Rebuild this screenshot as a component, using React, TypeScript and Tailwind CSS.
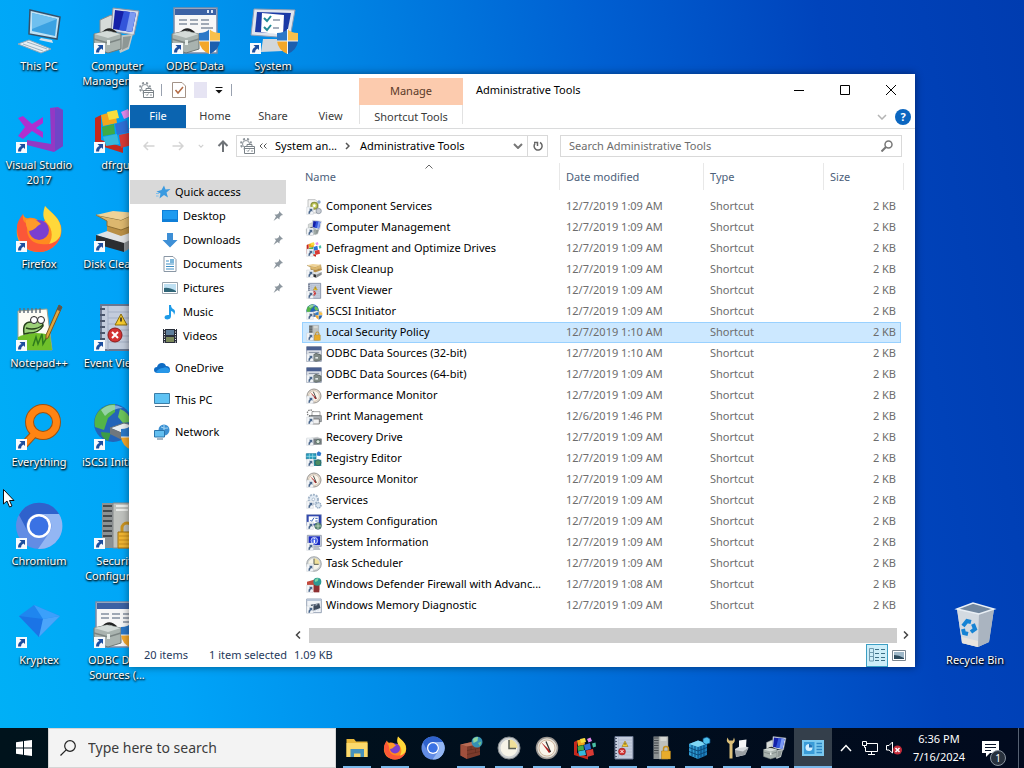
import type { ReactNode } from "react"

const shield = (
  <g>
    <path d="M28 26 Q35 26 38.500 22 V34 H28Z" fill="#2b78c8" />
    <path d="M38.500 22 Q42 26 49 26 V34 H38.500Z" fill="#f8c04a" />
    <path d="M28 34 H38.500 V47 Q29 43 28 34Z" fill="#f3a72a" />
    <path d="M38.500 34 H49 Q48 43 38.500 47Z" fill="#1c5fae" />
    <path d="M38.500 22 V47 M28 34 H49" stroke="#eef4fa" strokeWidth="1" />
  </g>
)

const toolbox = (
  <g>
    <path d="M10 26 Q16 19 23 26" fill="none" stroke="#222" strokeWidth="2.500" />
    <path d="M1 27 L14 24 L28 27 V42 L15 46 L1 41Z" fill="#a9b3af" stroke="#6f7875" strokeWidth="1" />
    <path d="M1 27 L14 24 L28 27 L15 31Z" fill="#d4dbd8" />
    <path d="M1 32 L15 36 L28 32" fill="none" stroke="#7c8583" strokeWidth="1.500" />
    <path d="M14 33 h3 v5 h-3z" fill="#e8eeea" />
  </g>
)

const glyphs: Record<string, ReactNode> = {
  pc: (
    <g>
      <path d="M15 3 L45 10 L42 32 L14 27Z" fill="#bfe2f5" stroke="#34516b" strokeWidth="1.500" />
      <path d="M17 6 L42 12 L40 29 L17 24Z" fill="#3ba2e2" />
      <path d="M17 6 L42 12 L17 22Z" fill="#6fc0ef" />
      <path d="M26 31 L37 33 L38 36 L24 33Z" fill="#d6e2ea" />
      <path d="M3 37 L14 33 L36 42 L26 46Z" fill="#e6eef3" stroke="#8fa7b8" strokeWidth="1" />
      <path d="M8 37 L28 44 M12 35 L32 42" stroke="#9db4c4" strokeWidth="1" />
    </g>
  ),
  mgmt: (
    <g>
      <path d="M7 13 L18 8 L22 10 V32 H7Z" fill="#d7dbd9" stroke="#848a8c" strokeWidth="1" />
      <path d="M20 1 L46 4 L41 28 L18 24Z" fill="#d7deea" stroke="#8c95a5" strokeWidth="1" />
      <path d="M22 3 L43 6 L39 25 L20 22Z" fill="#1420a8" />
      <path d="M31 4 L43 6 L39 25 L26 23Z" fill="#3355da" />
      <path d="M37 5 L43 6 L39 25 L33 24Z" fill="#7d9bf2" />
      <path d="M22 29 L40 27 L36 42 L27 46Z" fill="#c0c7c6" />
      <path d="M30 30 L38 29 L35 40 L29 43Z" fill="#8e9795" />
      {toolbox}
    </g>
  ),
  odbc: (
    <g>
      <path d="M3 1 H46 V46 H3Z" fill="#f7f7f7" stroke="#7c8aa6" strokeWidth="1.500" />
      <path d="M4 2 H45 V8 H4Z" fill="#3c62a4" />
      <path d="M36 3 h2 v3 h-2z M40 3 h2 v3 h-2z" fill="#d9e5f7" />
      <path d="M8 13 h8 M19 13 h8 M30 13 h8 M8 17 h8 M19 17 h8 M30 17 h8 M30 21 h12" stroke="#8490a0" strokeWidth="1.500" />
      {toolbox}
      {shield}
    </g>
  ),
  odbcSmall: (
    <g>
      <path d="M2 2 H46 V46 H2Z" fill="#e6e9ee" stroke="#68758f" strokeWidth="2" />
      <path d="M2 2 H46 V13 H2Z" fill="#4a5f90" />
      <path d="M8 19 H40 M26 25 H42" stroke="#7d899c" strokeWidth="3" />
      <path d="M20 28 L30 22 L45 27 V42 L30 46 L20 42Z" fill="#7f8985" stroke="#4d5653" strokeWidth="2" />
      <path d="M28 33 h8 v5 h-8z" fill="#dfe5e2" />
    </g>
  ),
  sysconf: (
    <g>
      <path d="M5 2 L46 3 L41 31 L2 28Z" fill="#dfe5ee" stroke="#8f9db3" strokeWidth="1" />
      <path d="M8 5 L42 6 L38 27 L6 25Z" fill="#1b3aa6" />
      <path d="M13 6 L35 8 L34 28 L12 25Z" fill="#fff" />
      <path d="M15 11 l3 3 l4 -5 M15 20 l3 3 l4 -5" fill="none" stroke="#218a96" strokeWidth="2" />
      <path d="M24 13 h7 M24 21 h6" stroke="#8a96a8" strokeWidth="1.500" />
      <path d="M14 32 L30 32 L34 44 L12 45Z" fill="#d2d7db" />
      {shield}
    </g>
  ),
  vs: (
    <g>
      <path d="M35 2 L43 1 L48 4 V40 L39 46 L12 39 V34 L36 38Z" fill="#9438c4" />
      <path d="M40 2 L48 4 V40 L40 45Z" fill="#6f45c8" />
      <path d="M3 12 L8 10 L17 18 L28 11 V32 L17 25 L8 33 L3 30 L10 21Z M28 17 L21 22 L28 26Z" fill="#b02fcf" fillRule="evenodd" />
    </g>
  ),
  defrag: (
    <g>
      <path d="M2 12 L8 9 V34 L30 41 V47 L2 38Z" fill="#c5281c" />
      <path d="M8 9 L22 5 L24 17 L10 20Z" fill="#f3a51c" />
      <path d="M14 6 L24 4 L26 12 L16 14Z" fill="#f7de3e" />
      <path d="M9 21 L21 18 L22 28 L10 30Z" fill="#3fab46" />
      <path d="M22 18 L34 14 L36 26 L24 29Z" fill="#2e6fd6" />
      <path d="M10 31 L24 28 L26 38 L13 40Z" fill="#35b8dc" />
      <path d="M26 29 L40 26 L42 38 L28 42Z" fill="#d83a34" />
      <path d="M28 6 L35 3 L38 10 L31 13Z" fill="#e58bee" />
      <path d="M38 15 L45 13 L46 21 L40 23Z" fill="#49c0a4" />
    </g>
  ),
  firefox: (
    <g>
      <path d="M30 1 C34 7 43 10 46 21 C49 34 38 47 24 47 C10 47 0 37 2 23 C3 16 7 12 8 9 C9 13 12 14 14 13 C20 12 24 16 25 17 C33 18 31 9 30 1Z" fill="#ff8a1f" />
      <path d="M30 1 C36 8 46 13 46 25 C46 34 40 42 31 43 C39 35 38 24 32 18 C27 13 28 7 30 1Z" fill="#ffd83a" />
      <path d="M2 23 C2 36 11 47 24 47 C35 47 43 40 46 30 C41 39 33 40 26 39 C14 38 10 28 13 18 C9 19 7 14 8 9 C5 13 2 17 2 23Z" fill="#fb5738" />
      <circle cx="24" cy="25" r="10" fill="#7a3fd0" />
      <path d="M11 15 C18 12 23 16 26 19 C21 21 21 25 14 26 Q10 21 11 15Z" fill="#ff9a2a" />
    </g>
  ),
  cleanup: (
    <g>
      <path d="M3 30 L20 24 L47 30 L31 39Z" fill="#dfe2e4" />
      <path d="M3 30 L31 38 V47 L3 39Z" fill="#2c2e31" />
      <path d="M31 38 L47 30 V38 L31 47Z" fill="#8b9094" />
      <path d="M14 20 L28 24 L46 18 L48 24 L28 31 L14 26Z" fill="#b98f45" />
      <path d="M3 10 L28 15 L44 8 L46 18 L28 25 L14 21 L14 16Z" fill="#dcb76e" stroke="#8f6f33" strokeWidth="1" />
      <path d="M3 10 L20 6 L44 8 L28 15Z" fill="#efd398" />
    </g>
  ),
  notepad: (
    <g>
      <path d="M3 7 L32 5 L37 46 H3Z" fill="#fdfdf5" stroke="#9aa08d" strokeWidth="1" />
      <path d="M3 33 Q18 26 35 31 L37 46 H3Z" fill="#6fc02a" />
      <path d="M18 42 l3 -9 l2 7 l4 -10 l1 10 l4 -7" fill="none" stroke="#2f7a1c" strokeWidth="1.500" />
      <path d="M5 4 v5 M9 4 v5 M13 4 v5 M17 4 v5 M21 4 v5 M25 4 v5" stroke="#63707c" strokeWidth="1.500" />
      <path d="M9 30 Q7 17 17 18 Q28 14 28 22 Q24 29 14 29Z" fill="#9bd077" stroke="#26421a" strokeWidth="1.500" />
      <path d="M11 24 Q20 27 28 21" fill="none" stroke="#26421a" strokeWidth="1.500" />
      <circle cx="19" cy="16" r="3.500" fill="#fff" stroke="#222" />
      <circle cx="26" cy="16" r="3.500" fill="#fff" stroke="#222" />
      <path d="M44 1 L47 3 L33 34 L31 35 L31 31Z" fill="#e0a63c" stroke="#7a5521" strokeWidth="1" />
      <path d="M44 1 L47 3 L45 7 L42 6Z" fill="#555" />
    </g>
  ),
  event: (
    <g>
      <path d="M8 1 H44 V46 H8Z" fill="#c3ccdc" stroke="#6a7790" strokeWidth="2" />
      <path d="M15 2 V46 M15 8 h28 M15 14 h28 M15 20 h28 M15 26 h28 M15 32 h28 M15 38 h28" stroke="#a3afc4" strokeWidth="1" />
      <path d="M7 5 h5 M7 11 h5 M7 17 h5 M7 23 h5 M7 29 h5 M7 35 h5 M7 41 h5" stroke="#4b566c" strokeWidth="2" />
      <path d="M28 10 L34 21 H22Z" fill="#f6cb2d" stroke="#8a6d0c" strokeWidth="1" />
      <path d="M28 13.500 v4" stroke="#222" strokeWidth="1.500" />
      <circle cx="22" cy="31" r="7" fill="#d33232" stroke="#8c1b1b" />
      <path d="M19 28 l6 6 M25 28 l-6 6" stroke="#fff" strokeWidth="2" />
    </g>
  ),
  everything: (
    <g fill="none">
      <path d="M19 31 L7 44" stroke="#9b5212" strokeWidth="8" />
      <circle cx="28" cy="19" r="13.500" stroke="#9b5212" strokeWidth="9" />
      <path d="M20 30 L8 43" stroke="#ff8412" strokeWidth="6" />
      <circle cx="28" cy="19" r="13.500" stroke="#ff8412" strokeWidth="7" />
    </g>
  ),
  iscsi: (
    <g>
      <circle cx="20" cy="20" r="19" fill="#2464b8" />
      <path d="M5 9 Q12 1 22 1 L22 9 L15 15 L11 27 L2 24 Q0 16 5 9Z" fill="#53b548" />
      <path d="M27 6 Q36 9 38 19 L30 20 L25 14Z" fill="#6cc45a" />
      <path d="M8 29 L18 30 L15 38 Q8 35 8 29Z" fill="#3c9c46" />
      <path d="M8 7 Q18 -2 30 5 Q20 5 12 13Z" fill="#d6efff" fillOpacity="0.5" />
      <path d="M17 25 L31 20 L47 24 L31 31Z" fill="#eceff1" stroke="#6c7378" strokeWidth="1" />
      <path d="M17 25 L31 31 V38 L17 31Z" fill="#70777d" />
      {shield}
    </g>
  ),
  chromium: (
    <g>
      <circle cx="24" cy="24" r="23" fill="#628ce4" />
      <path d="M4 13 A23 23 0 0 1 44 12 H24 A12 12 0 0 0 13 30Z" fill="#2f62cc" />
      <path d="M24 12 H44 A23 23 0 0 1 23 47 L34 31 A12 12 0 0 0 24 12Z" fill="#93b6f3" />
      <circle cx="24" cy="24" r="12" fill="#fff" />
      <circle cx="24" cy="24" r="9.500" fill="#3a72e4" />
    </g>
  ),
  security: (
    <g>
      <path d="M9 1 H20 V46 H9Z" fill="#8d9293" />
      <path d="M20 1 H38 V46 H20Z" fill="#bfc2be" stroke="#85898a" strokeWidth="1" />
      <path d="M10 4 h9 M10 9 h9 M10 14 h9 M10 19 h9 M10 24 h9 M10 29 h9 M10 34 h9" stroke="#464b4e" strokeWidth="2" />
      <path d="M23 4 h12 M23 8 h12" stroke="#e9ebe8" strokeWidth="2" />
      <path d="M29 31 v-5 a5 5 0 0 1 10 0 v5" fill="none" stroke="#c99320" strokeWidth="3" />
      <path d="M25 30 H43 V46 H25Z" fill="#f1b632" stroke="#9c7013" strokeWidth="1" />
      <path d="M26 34 h16 M26 38 h16 M26 42 h16" stroke="#c88d1c" strokeWidth="1" />
    </g>
  ),
  kryptex: (
    <g>
      <path d="M4 15 L19 4 L45 15 L24 36Z" fill="#1f86ef" />
      <path d="M19 4 L45 15 L28 18Z" fill="#3ba0fb" />
      <path d="M4 15 L28 18 L24 36Z" fill="#1b74e6" />
      <path d="M28 18 L45 15 L24 36Z" fill="#4ba5fa" />
    </g>
  ),
  bin: (
    <g>
      <path d="M6 8 L22 2 L43 8 L38 41 L27 46 L11 42Z" fill="#c2ccd6" />
      <path d="M6 8 L28 13 L27 46 L11 42Z" fill="#d3dae1" />
      <path d="M28 13 L43 8 L38 41 L27 46Z" fill="#aab4c0" />
      <path d="M6 8 L22 2 L43 8 L28 13Z" fill="#72879e" stroke="#e9eff5" strokeWidth="1.500" />
      <path d="M11 36 L27 40 V46 L11 42Z" fill="#e8e4de" />
      <g fill="none" stroke="#1583d4" strokeWidth="4">
        <path d="M12 25 L16 20 L20 21" />
        <path d="M22 23 L24 28 L20 31" />
        <path d="M17 33 L13 32 L12 28" />
      </g>
    </g>
  ),
  component: (
    <g>
      <path d="M6 2 H28 L36 10 V42 H6Z" fill="#f4f4f2" stroke="#a3a6a8" strokeWidth="2" />
      <circle cx="25" cy="20" r="10" fill="#c3cb5a" stroke="#8c9440" strokeWidth="4" />
      <circle cx="25" cy="20" r="4" fill="#fff" />
      <circle cx="39" cy="9" r="5" fill="#8fa9cc" />
      <circle cx="38" cy="36" r="8" fill="#c8cdd4" stroke="#7d8794" strokeWidth="2" />
    </g>
  ),
  perf: (
    <g>
      <circle cx="24" cy="24" r="21" fill="#e3dfd6" stroke="#9b9691" strokeWidth="3" />
      <circle cx="24" cy="24" r="16" fill="#faf6ec" stroke="#c8a98e" strokeWidth="1.500" />
      <path d="M12 12 L28 34 L32 31Z" fill="#b02020" />
      <path d="M22 11 L31 32" stroke="#333" strokeWidth="2.500" />
    </g>
  ),
  print: (
    <g>
      <circle cx="13" cy="12" r="9" fill="none" stroke="#777" strokeWidth="4" strokeDasharray="4 3" />
      <path d="M18 8 H42 V20 H18Z" fill="#fff" stroke="#777" strokeWidth="2" />
      <path d="M10 20 H46 V38 H10Z" fill="#a9adb1" stroke="#5c6165" strokeWidth="2" />
      <path d="M20 30 H40 V45 H20Z" fill="#f2f2f2" stroke="#555" strokeWidth="2" />
    </g>
  ),
  recovery: (
    <g>
      <path d="M2 26 L34 20 L47 26 V42 L20 46 L2 40Z" fill="#c9cccf" />
      <path d="M20 26 H47 V44 H20Z" fill="#787e83" />
      <circle cx="36" cy="35" r="6" fill="#d7e2d9" stroke="#3d5e48" strokeWidth="2" />
    </g>
  ),
  regedit: (
    <g>
      <path d="M4 16 L22 9 L40 15 V38 L22 46 L4 38Z" fill="#1d7fbe" />
      <path d="M4 16 L22 22 V46 L4 38Z" fill="#2f9bd2" />
      <path d="M4 16 L22 9 L40 15 L22 22Z" fill="#7fd6f3" />
      <path d="M4 23 L22 30 L40 23 M4 31 L22 38 L40 31 M10 18 V41 M16 20 V43 M28 20 V43 M34 18 V41 M22 22 V46" fill="none" stroke="#0b4a7c" strokeWidth="2" />
      <path d="M32 5 L40 2 L46 6 V14 L38 17 L32 13Z" fill="#4fc0ee" stroke="#0b4a7c" strokeWidth="1.500" />
    </g>
  ),
  regeditSmall: (
    <g>
      <path d="M1 8 H30 V24 H1Z" fill="#2a9fbe" stroke="#176f92" strokeWidth="2" />
      <path d="M10 8 V24 M20 8 V24 M1 16 H30" stroke="#a5e2ee" strokeWidth="2" />
      <path d="M38 1 L46 6 L43 15 L34 14 L32 6Z" fill="#2f78cc" />
      <path d="M22 26 H46 V45 H24Z" fill="#2b8f98" />
      <circle cx="36" cy="35" r="9" fill="#4d8c62" stroke="#25576a" strokeWidth="2" />
    </g>
  ),
  services: (
    <g>
      <circle cx="22" cy="19" r="14" fill="#e3ecf5" stroke="#a3b5c9" strokeWidth="6" strokeDasharray="6 3" />
      <circle cx="22" cy="19" r="4" fill="#fff" stroke="#8fa5bd" strokeWidth="2" />
      <circle cx="37" cy="37" r="8" fill="#dbe6f0" stroke="#8fa5bd" strokeWidth="4" strokeDasharray="4 2" />
    </g>
  ),
  sysconfSmall: (
    <g>
      <path d="M2 2 H46 V34 H2Z" fill="#2940ae" stroke="#8796bb" strokeWidth="2" />
      <path d="M8 7 H38 V29 H8Z" fill="#fff" />
      <path d="M13 18 l4 4 l7 -11 M28 13 h7 M28 21 h7" fill="none" stroke="#3b66b8" strokeWidth="3" />
      <circle cx="36" cy="36" r="10" fill="#5d8d6c" stroke="#3c5f6c" strokeWidth="2" />
      <path d="M36 27 V45 M27 36 H45" stroke="#dbe8e0" strokeWidth="2" />
    </g>
  ),
  info: (
    <g>
      <path d="M4 1 H46 V34 H4Z" fill="#c8d0e0" stroke="#7d8799" strokeWidth="2" />
      <path d="M8 4 H42 V30 H8Z" fill="#1c2cc0" />
      <circle cx="25" cy="17" r="10" fill="#4a66ea" stroke="#fff" strokeWidth="2" />
      <path d="M25 10 v3 M25 15 v9" stroke="#fff" strokeWidth="4" />
      <path d="M20 35 H38 L44 45 H16Z" fill="#b9bfc8" />
    </g>
  ),
  task: (
    <g>
      <circle cx="24" cy="24" r="22" fill="#ccd0d2" stroke="#84898c" strokeWidth="2" />
      <circle cx="24" cy="24" r="17" fill="#f6f4e8" />
      <path d="M24 24 V7 A17 17 0 0 1 41 24Z" fill="#efe09a" />
      <path d="M24 8 V25 H38" fill="none" stroke="#5a5f55" strokeWidth="3" />
    </g>
  ),
  firewall: (
    <g>
      <path d="M3 17 L30 11 L42 16 V38 L16 46 L3 39Z" fill="#7b3a2b" />
      <path d="M3 17 L16 21 V46 L3 39Z" fill="#a0503d" />
      <path d="M3 17 L30 11 L42 16 L16 21Z" fill="#b96c55" />
      <path d="M16 29 L42 24 M16 37 L42 31 M24 20 V28 M33 26 V33" stroke="#532419" strokeWidth="1" />
      <circle cx="36" cy="12" r="11" fill="#3590b4" />
      <path d="M28 6 Q33 1 38 2 L37 10 L29 14Z" fill="#8fd6a0" />
      <path d="M38 14 L45 11 L42 20Z" fill="#71c48a" />
    </g>
  ),
  firewallSmall: (
    <g>
      <path d="M3 14 L24 8 L40 16 V40 L20 46 L3 38Z" fill="#c34a3d" />
      <path d="M24 24 H40 V46 H24Z" fill="#8e2f31" />
      <circle cx="34" cy="14" r="12" fill="#2d9a94" />
      <path d="M26 8 Q32 2 38 4 L35 12 L28 15Z" fill="#7fd6a4" />
    </g>
  ),
  memory: (
    <g>
      <path d="M2 3 H46 V44 H2Z" fill="#f0f3f7" stroke="#687a94" strokeWidth="2" />
      <path d="M2 3 H46 V9 H2Z" fill="#b9c6d8" />
      <path d="M14 20 L40 16 L43 30 L22 38Z" fill="#3d4a5c" />
      <path d="M20 22 l5 -1 M28 21 l6 -1 M28 40 v-5 M36 38 v-5" stroke="#c7d2e2" strokeWidth="3" />
    </g>
  ),
  explorer: (
    <g>
      <path d="M3 6 H18 L22 11 H45 V42 H3Z" fill="#e9b83a" />
      <path d="M3 14 H45 V42 H3Z" fill="#fbd96c" />
      <path d="M11 26 H38 V42 H31 V35 H18 V42 H11Z" fill="#4792bd" />
    </g>
  ),
  devices: (
    <g>
      <path d="M5 3 Q1 12 9 16 V45 H15 V16 Q22 12 18 3 L16 9 H8Z" fill="#dcc07a" />
      <path d="M20 26 L34 18 L47 23 L40 38 L22 42Z" fill="#d5d9dc" />
      <path d="M28 9 L43 7 L42 22 L28 24Z" fill="#f5f5f5" />
      <path d="M20 28 L36 31 L47 23 L41 37 L23 42Z" fill="#9a9fa3" />
    </g>
  ),
  panel: (
    <g>
      <path d="M2 8 H46 V40 H2Z" fill="#7cc9ef" />
      <path d="M6 12 H27 V36 H6Z" fill="#3a9cd8" />
      <circle cx="16" cy="23" r="7" fill="#d5f0ff" />
      <path d="M16 23 V16 A7 7 0 0 1 23 23Z" fill="#1d6fb4" />
      <path d="M31 15 h11 M31 21 h11 M31 27 h11 M31 33 h11" stroke="#2a86c4" strokeWidth="3" />
    </g>
  ),
}

function Glyph({ name, className, shortcut }: { name: string; className: string; shortcut?: "large" | "small" }) {
  return (
    <svg viewBox="0 0 48 48" className={`overflow-visible ${className}`} aria-hidden="true">
      {glyphs[name]}
      {shortcut === "large" && (
        <g>
          <path d="M1 36 h11 v11 h-11z" fill="#f7fafd" />
          <path d="M3 45.500 Q3 41 6.500 40 L4.500 38 H10 V43 L8.500 41.500 Q6 42.500 6 45.500Z" fill="#1d4e9e" />
        </g>
      )}
      {shortcut === "small" && (
        <g>
          <path d="M2 24 h20 v22 h-20z" fill="#f4f6f8" stroke="#b4bdc6" strokeWidth="1" />
          <path d="M7 44 Q7 35 12 33 L9 29 H19 V39 L16 36 Q12 38 12 44Z" fill="#4a678c" />
        </g>
      )}
    </svg>
  )
}

const desktopColumns = [
  [
    { icon: "pc", label: "This PC", plain: true },
    { icon: "vs", label: "Visual Studio 2017" },
    { icon: "firefox", label: "Firefox" },
    { icon: "notepad", label: "Notepad++" },
    { icon: "everything", label: "Everything" },
    { icon: "chromium", label: "Chromium" },
    { icon: "kryptex", label: "Kryptex" },
  ],
  [
    { icon: "mgmt", label: "Computer Management" },
    { icon: "defrag", label: "dfrgui" },
    { icon: "cleanup", label: "Disk Cleanup" },
    { icon: "event", label: "Event Viewer" },
    { icon: "iscsi", label: "iSCSI Initiator" },
    { icon: "security", label: "Security Configurat..." },
    { icon: "odbc", label: "ODBC Data Sources (..." },
  ],
  [{ icon: "odbc", label: "ODBC Data" }],
  [{ icon: "sysconf", label: "System" }],
]

function DesktopIcon({ icon, label, plain }: { icon: string; label: string; plain?: boolean }) {
  return (
    <button className="flex h-[99px] w-[78px] flex-col items-center pt-[7px]">
      <Glyph name={icon} className="size-12 shrink-0" shortcut={plain ? undefined : "large"} />
      <span className="mt-[3px] w-[76px] text-center leading-[15px] text-white [text-shadow:1px_1px_2px_#000,0_1px_2px_#000]">{label}</span>
    </button>
  )
}

const files = [
  ["component", "Component Services", "12/7/2019 1:09 AM"],
  ["mgmt", "Computer Management", "12/7/2019 1:09 AM"],
  ["defrag", "Defragment and Optimize Drives", "12/7/2019 1:09 AM"],
  ["cleanup", "Disk Cleanup", "12/7/2019 1:09 AM"],
  ["event", "Event Viewer", "12/7/2019 1:09 AM"],
  ["iscsi", "iSCSI Initiator", "12/7/2019 1:09 AM"],
  ["security", "Local Security Policy", "12/7/2019 1:10 AM"],
  ["odbcSmall", "ODBC Data Sources (32-bit)", "12/7/2019 1:10 AM"],
  ["odbcSmall", "ODBC Data Sources (64-bit)", "12/7/2019 1:09 AM"],
  ["perf", "Performance Monitor", "12/7/2019 1:09 AM"],
  ["print", "Print Management", "12/6/2019 1:46 PM"],
  ["recovery", "Recovery Drive", "12/7/2019 1:09 AM"],
  ["regeditSmall", "Registry Editor", "12/7/2019 1:09 AM"],
  ["perf", "Resource Monitor", "12/7/2019 1:09 AM"],
  ["services", "Services", "12/7/2019 1:09 AM"],
  ["sysconfSmall", "System Configuration", "12/7/2019 1:09 AM"],
  ["info", "System Information", "12/7/2019 1:09 AM"],
  ["task", "Task Scheduler", "12/7/2019 1:09 AM"],
  ["firewallSmall", "Windows Defender Firewall with Advanc...", "12/7/2019 1:08 AM"],
  ["memory", "Windows Memory Diagnostic", "12/7/2019 1:09 AM"],
]

const navIcons: Record<string, ReactNode> = {
  star: (
    <g>
      <path d="M9 1.500 L10.500 5.500 L15.500 5 L11.500 8.500 L13 13.500 L9 11 L4.500 14.500 L5.500 9.500 L1.500 7.500 L6.500 6Z" fill="#3a9ae0" />
      <path d="M1 9.500 H4 M1 12 H3.500" stroke="#7dbfee" />
    </g>
  ),
  desktop: (
    <g>
      <path d="M0 2 H16 V14 H0Z" fill="#0f7fd8" />
      <path d="M1 3 H15 V11 H1Z" fill="#1e9bf0" />
    </g>
  ),
  downloads: <path d="M5 1 H11 V8 H15.500 L8 15.500 L0.500 8 H5Z" fill="#3d8fd6" />,
  documents: (
    <g>
      <path d="M2 0.500 H11 L14 3.500 V15.500 H2Z" fill="#fff" stroke="#8a97a5" />
      <path d="M4 5 h3 M4 8 h8 M4 10.500 h8 M4 13 h8" stroke="#3f8fc4" />
      <path d="M8 3 h4 v4 h-4z" fill="#7bb6da" />
    </g>
  ),
  pictures: (
    <g>
      <path d="M0.500 2.500 H15.500 V13.500 H0.500Z" fill="#fff" stroke="#9aa5ae" />
      <path d="M2 4 H14 V12 H2Z" fill="#bfe0f2" />
      <path d="M2 8 Q7 7 14 11 V12 H2Z" fill="#2f6577" />
    </g>
  ),
  music: <path d="M7 1 H9 Q9 4 12 5.500 Q14 7 12 11 Q12 7.500 9 7 V12 Q9 15 5.500 15.500 Q2.500 15.500 2.500 13 Q3 10.500 7 11Z" fill="#1e9be8" />,
  videos: (
    <g>
      <path d="M1 1 H15 V15 H1Z" fill="#2a2f3a" />
      <path d="M4 2 H12 V7 H4Z" fill="#5f7f9c" />
      <path d="M4 9 H12 V14 H4Z" fill="#7c8a5c" />
      <path d="M2.500 1 V15 M13.500 1 V15" stroke="#fff" strokeDasharray="1 1.500" />
    </g>
  ),
  onedrive: (
    <g>
      <path d="M3 7 Q4 3 8 3 Q11 3 12 6 Q16 6 16 10 Q16 13 13 13 H4 Q0 13 0 10 Q0 7 3 7Z" fill="#0f6cc4" />
      <path d="M2 12 Q5 8 9 8 Q13 6 16 10 Q16 13 13 13 H4Z" fill="#2797e8" />
    </g>
  ),
  pc: (
    <g>
      <path d="M0.500 1.500 H15.500 V11.500 H0.500Z" fill="#5fc3f4" stroke="#3b7ea8" />
      <path d="M1 14.500 H15" stroke="#5b7083" />
    </g>
  ),
  network: (
    <g>
      <circle cx="10" cy="6" r="5.500" fill="#3b90d2" />
      <path d="M7 3 Q10 5 14 4 M10 1 V8" stroke="#a8d8f5" fill="none" />
      <path d="M0.500 6.500 H10.500 V13 H0.500Z" fill="#63bff0" stroke="#2b76ad" />
      <path d="M3 15 H9" stroke="#4b6f8c" />
    </g>
  ),
}

const quickAccess = [
  { icon: "desktop", label: "Desktop", pinned: true },
  { icon: "downloads", label: "Downloads", pinned: true },
  { icon: "documents", label: "Documents", pinned: true },
  { icon: "pictures", label: "Pictures", pinned: true },
  { icon: "music", label: "Music" },
  { icon: "videos", label: "Videos" },
]

const roots = [
  { icon: "onedrive", label: "OneDrive" },
  { icon: "pc", label: "This PC" },
  { icon: "network", label: "Network" },
]

function NavIcon({ name }: { name: string }) {
  return (
    <svg viewBox="0 0 16 16" className="size-4 shrink-0" aria-hidden="true">
      {navIcons[name]}
    </svg>
  )
}

function Pin() {
  return (
    <svg viewBox="0 0 12 12" className="mr-0.5 ml-auto size-3" aria-hidden="true">
      <path d="M7 1 L11 5 L9 5.500 L7.500 7.500 L7.500 9.500 L5.500 8 L1.500 11 L4 6.500 L2.500 4.500 L5 4.500 L7 3Z" fill="#8d979f" />
    </svg>
  )
}

function ToolsIcon() {
  return (
    <svg viewBox="0 0 16 16" className="size-4 shrink-0" fill="none" stroke="#8c9399" aria-hidden="true">
      <circle cx="7" cy="6" r="5" strokeWidth="2" strokeDasharray="2 2" />
      <circle cx="7" cy="6" r="3.500" />
      <path d="M5.500 8.500 H15.500 V15.500 H5.500Z M8 8 V6.500 H13 V8" fill="#fff" stroke="#7b8389" />
      <path d="M6 10.500 H15" stroke="#7b8389" />
      <path d="M8 12.500 l1 1 l1.500 -2 M12 13 h2" />
    </svg>
  )
}

function TitleBar() {
  return (
    <div className="flex h-[31px] shrink-0 items-center">
      <div className="flex w-[230px] items-center pl-[9px]">
        <ToolsIcon />
        <span className="ml-[7px] h-3 w-px bg-gray-400" />
        <button aria-label="Properties" className="ml-2.5">
          <svg viewBox="0 0 14 16" className="block h-4 w-3.5">
            <path d="M0.500 0.500 H10 L13.500 4 V15.500 H0.500Z" fill="#fff" stroke="#a39388" />
            <path d="M3.500 8 L6 11 L11 5" fill="none" stroke="#b36b44" strokeWidth="1.500" />
          </svg>
        </button>
        <span className="ml-2 h-4 w-[13px] bg-[#e6e4f3]" />
        <button aria-label="Customize Quick Access Toolbar" className="ml-2">
          <svg viewBox="0 0 8 8" className="block size-2">
            <path d="M0.500 1.500 H7.500" stroke="#111" />
            <path d="M0.500 4 H7.500 L4 7.500Z" fill="#111" />
          </svg>
        </button>
        <span className="ml-2 h-3 w-px bg-gray-400" />
      </div>
      <div className="mt-1 flex h-[27px] w-[104px] items-center justify-center bg-[#fccbae] text-[#5a3a28]">Manage</div>
      <div className="ml-[13px] flex-1 pt-px text-black">Administrative Tools</div>
      <button aria-label="Minimize" className="flex h-full w-[46px] items-center justify-center">
        <svg viewBox="0 0 10 10" className="size-2.5"><path d="M0 5.500 H10" stroke="#000" /></svg>
      </button>
      <button aria-label="Maximize" className="flex h-full w-[46px] items-center justify-center">
        <svg viewBox="0 0 10 10" className="size-2.5"><path d="M0.500 0.500 H9.500 V9.500 H0.500Z" fill="none" stroke="#000" /></svg>
      </button>
      <button aria-label="Close" className="mr-px flex h-full w-[46px] items-center justify-center">
        <svg viewBox="0 0 10 10" className="size-2.5"><path d="M0 0 L10 10 M10 0 L0 10" stroke="#000" /></svg>
      </button>
    </div>
  )
}

function RibbonTabs() {
  return (
    <div className="flex h-6 shrink-0 border-b border-[#dadbdc] text-[#3b3b3b]">
      <button className="ml-px w-14 bg-[#0b64b0] text-white">File</button>
      <button className="w-[58px]">Home</button>
      <button className="w-[58px]">Share</button>
      <button className="w-[57px]">View</button>
      <button className="mb-1 w-[104px] border-x border-[#e2e2e2] pt-1">Shortcut Tools</button>
      <div className="ml-auto flex items-center gap-2 pr-1">
        <button aria-label="Expand the Ribbon">
          <svg viewBox="0 0 10 6" className="h-1.5 w-2.5"><path d="M1 1 L5 5 L9 1" fill="none" stroke="#b4b4b4" strokeWidth="1.500" /></svg>
        </button>
        <button aria-label="Help" className="size-4 rounded-full bg-[#0b66c0] text-[11px] leading-4 font-bold text-white">?</button>
      </div>
    </div>
  )
}

function AddressRow() {
  return (
    <div className="flex h-[34px] shrink-0 items-center pr-[13px] pl-3.5">
      <button aria-label="Back" className="w-[29px]">
        <svg viewBox="0 0 12 10" className="h-2.5 w-3"><path d="M11.500 5 H1 M5 1 L1 5 L5 9" fill="none" stroke="#d4d4d4" strokeWidth="1.500" /></svg>
      </button>
      <button aria-label="Forward" className="w-[26px]">
        <svg viewBox="0 0 12 10" className="h-2.5 w-3"><path d="M0.500 5 H11 M7 1 L11 5 L7 9" fill="none" stroke="#d4d4d4" strokeWidth="1.500" /></svg>
      </button>
      <button aria-label="Recent locations" className="w-[19px]">
        <svg viewBox="0 0 8 5" className="h-1 w-1.5"><path d="M1 1 L4 4 L7 1" fill="none" stroke="#d0d0d0" strokeWidth="1.500" /></svg>
      </button>
      <button aria-label="Up" className="w-[19px]">
        <svg viewBox="0 0 12 12" className="size-3"><path d="M6 12 V1.500 M1.500 6 L6 1.500 L10.500 6" fill="none" stroke="#6f7378" strokeWidth="2" /></svg>
      </button>
      <div className="flex h-[22px] w-[312px] items-center border border-[#d9d9d9] pl-0.5 text-black">
        <ToolsIcon />
        <button aria-label="More folders" className="ml-1">
          <svg viewBox="0 0 8 6" className="h-1.5 w-2"><path d="M3.500 0.500 L1 3 L3.500 5.500 M7.500 0.500 L5 3 L7.500 5.500" fill="none" stroke="#555" /></svg>
        </button>
        <button className="ml-2 w-[63px] text-left whitespace-nowrap">System an...</button>
        <svg viewBox="0 0 5 8" className="ml-[7px] h-2 w-[5px]"><path d="M1 1 L4 4 L1 7" fill="none" stroke="#555" strokeWidth="1.500" /></svg>
        <button className="ml-2.5 whitespace-nowrap">Administrative Tools</button>
        <button aria-label="Previous locations" className="mr-1 ml-auto">
          <svg viewBox="0 0 10 6" className="h-1.5 w-2.5"><path d="M1 1 L5 5 L9 1" fill="none" stroke="#777" strokeWidth="2" /></svg>
        </button>
        <button aria-label="Refresh" className="flex h-full w-5 items-center justify-center border-l border-[#d9d9d9]">
          <svg viewBox="0 0 12 12" className="size-3">
            <path d="M3 3.500 A4 4 0 1 0 8 2.500 M2 2.500 H5.500 V6" fill="none" stroke="#666" strokeWidth="1.500" />
          </svg>
        </button>
      </div>
      <label className="ml-3 flex h-[22px] flex-1 items-center border border-[#d9d9d9] pr-2 pl-2">
        <input type="search" aria-label="Search Administrative Tools" placeholder="Search Administrative Tools" className="min-w-0 flex-1 outline-none placeholder:text-[#6d6d6d]" />
        <svg viewBox="0 0 12 12" className="size-3" fill="none" stroke="#777" strokeWidth="1.500">
          <circle cx="7.500" cy="4.500" r="3.500" />
          <path d="M5 7 L0.500 11.500" strokeWidth="2" />
        </svg>
      </label>
    </div>
  )
}

function NavPane() {
  return (
    <nav className="ml-px w-[156px] shrink-0 pt-[17px] text-black">
      <button className="flex h-6 w-full items-center gap-1 bg-[#d9d9d9] pl-[25px]">
        <NavIcon name="star" />
        Quick access
      </button>
      {quickAccess.map((item) => (
        <button key={item.label} className="flex h-6 w-full items-center gap-[5px] pl-8">
          <NavIcon name={item.icon} />
          {item.label}
          {item.pinned && <Pin />}
        </button>
      ))}
      {roots.map((item) => (
        <button key={item.label} className="mt-2 flex h-6 w-full items-center gap-[5px] pl-6">
          <NavIcon name={item.icon} />
          {item.label}
        </button>
      ))}
    </nav>
  )
}

function FileTable() {
  return (
    <div className="relative min-w-0 flex-1 pr-3.5 pl-4">
      <svg viewBox="0 0 8 5" className="absolute top-px left-[139px] h-[5px] w-2"><path d="M0.500 4.500 L4 1 L7.500 4.500" fill="none" stroke="#666" /></svg>
      <table className="w-full table-fixed text-left">
        <thead className="text-[#4c607a]">
          <tr className="h-[33px] align-top">
            <th className="font-normal"><div className="h-[27px] border-r border-[#e8e8e8] pl-[3px] leading-[27px]">Name</div></th>
            <th className="w-36 font-normal"><div className="h-[27px] border-r border-[#e8e8e8] pl-1.5 leading-[27px]">Date modified</div></th>
            <th className="w-[120px] font-normal"><div className="h-[27px] border-r border-[#e8e8e8] pl-1.5 leading-[27px]">Type</div></th>
            <th className="w-[77px] font-normal"><div className="-mr-[3px] h-[27px] border-r border-[#e8e8e8] pl-1.5 leading-[27px]">Size</div></th>
          </tr>
        </thead>
        <tbody className="text-[#6d6d6d]">
          {files.map(([icon, name, date]) => (
            <tr
              key={name}
              className={name === "Local Security Policy" ? "h-[21px] bg-[#cce8ff] outline -outline-offset-1 outline-[#99d1ff]" : "h-[21px]"}
            >
              <td>
                <div className="flex items-center gap-1 pl-1 whitespace-nowrap text-black">
                  <Glyph name={icon} className="size-4 shrink-0" shortcut="small" />
                  {name}
                </div>
              </td>
              <td className="pl-1.5">{date}</td>
              <td className="pl-1.5">Shortcut</td>
              <td className="pr-[5px] text-right">2 KB</td>
            </tr>
          ))}
        </tbody>
      </table>
    </div>
  )
}

function Scrollbar() {
  return (
    <div className="ml-[162px] flex h-4 shrink-0 items-center">
      <button aria-label="Scroll left" className="flex h-full w-[18px] items-center justify-center pr-1">
        <svg viewBox="0 0 6 8" className="h-2 w-1.5"><path d="M5 0.500 L1.500 4 L5 7.500" fill="none" stroke="#444" strokeWidth="1.500" /></svg>
      </button>
      <div className="h-[15px] flex-1 bg-[#cdcdcd]" />
      <button aria-label="Scroll right" className="flex h-full w-[18px] items-center justify-center">
        <svg viewBox="0 0 6 8" className="h-2 w-1.5"><path d="M1 0.500 L4.500 4 L1 7.500" fill="none" stroke="#444" strokeWidth="1.500" /></svg>
      </button>
    </div>
  )
}

function StatusBar() {
  return (
    <div className="flex h-6 shrink-0 items-center pl-[15px] text-[#26395b]">
      <span className="w-[65px]">20 items</span>
      <span className="w-[85px] whitespace-nowrap">1 item selected</span>
      <span>1.09 KB</span>
      <button aria-label="Details view" className="ml-auto flex h-[23px] w-[22px] items-center justify-center border border-[#3c9fc4] bg-[#cdeef9]">
        <svg viewBox="0 0 16 14" className="h-3.5 w-4">
          <path d="M0.500 0.500 H4.500 V13 H0.500Z M0 4.500 h5 M0 8.500 h5" fill="none" stroke="#6f9bb0" />
          <path d="M6 1.500 h4 M6 5.500 h4 M6 9.500 h4 M6 12.500 h4 M12 1.500 h4 M12 5.500 h4 M12 9.500 h4 M12 12.500 h4" stroke="#3d7187" />
        </svg>
      </button>
      <button aria-label="Large icons view" className="mr-[9px] ml-1">
        <svg viewBox="0 0 14 11" className="block h-[11px] w-3.5">
          <path d="M0.500 0.500 H13.500 V10.500 H0.500Z" fill="#fff" stroke="#7c8790" />
          <path d="M2 2 H12 V9 H2Z" fill="#9fb8c8" />
          <path d="M2 5 Q7 5 12 8 V9 H2Z" fill="#2c4a5c" />
        </svg>
      </button>
    </div>
  )
}

function ExplorerWindow() {
  return (
    <main className="absolute top-[74px] right-[109px] bottom-[61px] left-[129px] flex flex-col bg-white shadow-[0_0_8px_rgba(0,0,0,0.45)]">
      <TitleBar />
      <RibbonTabs />
      <AddressRow />
      <div className="flex min-h-0 flex-1">
        <NavPane />
        <FileTable />
      </div>
      <Scrollbar />
      <StatusBar />
    </main>
  )
}

const taskbarApps = [
  { icon: "explorer", label: "File Explorer", open: true },
  { icon: "firefox", label: "Firefox", open: true },
  { icon: "chromium", label: "Chromium", open: false },
  { icon: "firewall", label: "Windows Defender Firewall", open: true },
  { icon: "task", label: "Task Scheduler", open: true },
  { icon: "perf", label: "Performance Monitor", open: true },
  { icon: "defrag", label: "Optimize Drives", open: true },
  { icon: "event", label: "Event Viewer", open: true },
  { icon: "security", label: "Local Security Policy", open: true },
  { icon: "regedit", label: "Registry Editor", open: true },
  { icon: "devices", label: "Print Management", open: true },
  { icon: "mgmt", label: "Computer Management", open: true },
]

function Taskbar() {
  return (
    <footer className="flex h-10 shrink-0 items-stretch bg-linear-to-r from-[#00131c] to-[#010a1e] text-white">
      <button aria-label="Start" className="flex w-12 items-center justify-center">
        <svg viewBox="0 0 16 16" className="size-4" fill="#fff">
          <path d="M0 2.200 L7 1.200 V7.500 H0Z M8 1 L16 0 V7.500 H8Z M0 8.500 H7 V14.800 L0 13.800Z M8 8.500 H16 V16 L8 15Z" />
        </svg>
      </button>
      <label className="flex w-72 items-center gap-3 border border-[#d5d5d5] bg-[#f3f3f3] pl-[11px]">
        <svg viewBox="0 0 16 16" className="size-4" fill="none" stroke="#222" strokeWidth="1.200">
          <circle cx="10" cy="6" r="5.300" />
          <path d="M6.200 9.800 L0.500 15.500" />
        </svg>
        <input type="search" aria-label="Type here to search" placeholder="Type here to search" className="min-w-0 flex-1 text-sm outline-none placeholder:text-[#3c3c3c]" />
      </label>
      <div className="ml-0.5 flex">
        {taskbarApps.map((app) => (
          <button
            key={app.label}
            aria-label={app.label}
            className={app.open ? "flex w-[38px] flex-col items-center after:mt-auto after:h-0.5 after:w-7 after:bg-[#7ab8ea]" : "flex w-[38px] flex-col items-center"}
          >
            <Glyph name={app.icon} className="mt-2 size-6" />
          </button>
        ))}
        <button aria-label="Administrative Tools" className="flex w-[38px] flex-col items-center bg-[#343f4b] after:mt-auto after:h-0.5 after:w-full after:bg-[#7ab8ea]">
          <Glyph name="panel" className="mt-2 size-6" />
        </button>
      </div>
      <div className="ml-auto flex items-center">
        <button aria-label="Show hidden icons" className="mr-2.5">
          <svg viewBox="0 0 12 8" className="h-2 w-3"><path d="M1 7 L6 1.500 L11 7" fill="none" stroke="#fff" strokeWidth="1.500" /></svg>
        </button>
        <button aria-label="Network" className="mr-2">
          <svg viewBox="0 0 16 14" className="h-3.5 w-4" fill="none" stroke="#fff">
            <path d="M4.500 2.500 H15.500 V10.500 H3.500 V6 M9.500 10.500 V13.500 M6 13.500 H13" />
            <path d="M0.500 0.500 H4.500 V4.500 H0.500Z M2.500 4.500 V6.500 H4" />
          </svg>
        </button>
        <button aria-label="Volume muted">
          <svg viewBox="0 0 16 14" className="h-3.5 w-4">
            <path d="M0.500 4.500 H3 L6.500 1 V12 L3 9 H0.500Z" fill="none" stroke="#fff" />
            <circle cx="11.500" cy="9" r="4.500" fill="#c42b3a" />
            <path d="M9.500 7 l4 4 M13.500 7 l-4 4" stroke="#fff" strokeWidth="1.500" />
          </svg>
        </button>
        <div className="w-[74px] text-center leading-[18px]">
          6:36 PM
          <br />
          7/16/2024
        </div>
        <button aria-label="1 new notification" className="relative ml-1.5 h-7 w-6">
          <svg viewBox="0 0 17 16" className="mt-0.5 mb-auto h-4 w-[17px]">
            <path d="M0 0 H17 V12 H8 L4 16 V12 H0Z" fill="#fff" />
            <path d="M3 3.500 H14 M3 6.500 H14 M3 9.500 H9" stroke="#09152a" />
          </svg>
          <span className="absolute right-0 -bottom-1 size-4 rounded-full border border-[#8a94a0] bg-[#28313d] text-[10px] leading-[14px]">1</span>
        </button>
        <span className="ml-3 h-10 w-px bg-[#566172]" />
        <button aria-label="Show desktop" className="h-10 w-[5px]" />
      </div>
    </footer>
  )
}

export default function App() {
  return (
    <div className="flex h-screen min-h-[600px] flex-col overflow-hidden font-['Noto_Sans','Open_Sans',sans-serif] text-[11px]">
      <div className="relative flex-1 bg-[linear-gradient(80deg,#00b0f6_0%,#00a4f8_16%,#0088e6_38%,#0060d2_62%,#0044bc_82%,#003cb0_100%)]">
        <div className="flex">
          {desktopColumns.map((column, i) => (
            <div key={i} className="flex flex-col">
              {column.map((item) => (
                <DesktopIcon key={item.label} {...item} />
              ))}
            </div>
          ))}
        </div>
        <div className="absolute right-2.5 bottom-[35px]">
          <DesktopIcon icon="bin" label="Recycle Bin" plain />
        </div>
        <ExplorerWindow />
        <svg viewBox="0 0 12 19" className="absolute top-[489px] left-[3px] h-[19px] w-3" aria-hidden="true">
          <path d="M0.500 0.500 V15 L4 12 L6.500 18 L9 17 L6.500 11.500 H11Z" fill="#fff" stroke="#111" />
        </svg>
      </div>
      <Taskbar />
    </div>
  )
}
